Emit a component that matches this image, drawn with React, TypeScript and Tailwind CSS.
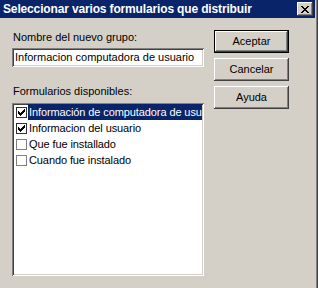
import React from "react";

interface FormItem {
  label: string;
  checked: boolean;
  selected?: boolean;
}

const items: FormItem[] = [
  { label: "Información de computadora de usuario", checked: true, selected: true },
  { label: "Informacion del usuario", checked: true },
  { label: "Que fue installado", checked: false },
  { label: "Cuando fue instalado", checked: false },
];

const raised =
  "shadow-[inset_-1px_-1px_#404040,inset_1px_1px_#ffffff,inset_-2px_-2px_#808080,inset_2px_2px_#d4d0c8]";
const sunken =
  "shadow-[inset_1px_1px_#808080,inset_-1px_-1px_#ffffff,inset_2px_2px_#404040,inset_-2px_-2px_#d4d0c8]";

const CheckBox: React.FC<{ checked: boolean }> = ({ checked }) => (
  <span
    className={`flex h-[11px] w-[11px] shrink-0 items-center justify-center border bg-white ${
      checked ? "border-[#303030]" : "border-[#808080]"
    }`}
  >
    {checked && (
      <svg width="7" height="7" viewBox="0 0 7 7" shapeRendering="crispEdges">
        <path d="M0 2h1v3H0zM1 3h1v3H1zM2 4h1v3H2zM3 3h1v3H3zM4 2h1v3H4zM5 1h1v3H5zM6 0h1v3H6z" fill="#000" />
      </svg>
    )}
  </span>
);

const Button: React.FC<{ label: string; isDefault?: boolean }> = ({ label, isDefault }) =>
  isDefault ? (
    <div className="border border-black">
      <div className={`flex h-[21px] w-[73px] items-center justify-center bg-[#d4d0c8] ${raised}`}>
        {label}
      </div>
    </div>
  ) : (
    <div className={`flex h-[23px] w-[75px] items-center justify-center bg-[#d4d0c8] ${raised}`}>
      {label}
    </div>
  );

export default function App() {
  return (
    <div
      className="h-[288px] w-[318px] overflow-hidden border-r border-[#404040] bg-[#d4d0c8] text-[11px] leading-[13px] text-black"
      style={{ fontFamily: '"Liberation Sans", Arial, sans-serif' }}
    >
      <div className="h-full border-r border-[#808080] pr-[1px]">
        <div className="flex h-[18px] items-center justify-between bg-[#0a246a] pl-[3px] pr-[2px]">
          <span className="text-[12px] font-bold tracking-[-0.15px] text-white">
            Seleccionar varios formularios que distribuir
          </span>
          <div className={`flex h-[14px] w-[16px] items-center justify-center bg-[#d4d0c8] ${raised}`}>
            <svg width="8" height="7" viewBox="0 0 8 7" shapeRendering="crispEdges">
              <path
                d="M0 0h2v1H0zM6 0h2v1H6zM1 1h2v1H1zM5 1h2v1H5zM2 2h4v1H2zM3 3h2v1H3zM2 4h4v1H2zM1 5h2v1H1zM5 5h2v1H5zM0 6h2v1H0zM6 6h2v1H6z"
                fill="#000"
              />
            </svg>
          </div>
        </div>

        <div className="flex items-start pl-[12px] pt-[12px]">
          <div className="flex w-[192px] flex-col">
            <label className="mt-[1px] pl-[1px]">Nombre del nuevo grupo:</label>
            <div className={`mt-[4px] flex h-[19px] items-center bg-white pl-[3px] ${sunken}`}>
              Informacion computadora de usuario
            </div>

            <label className="mt-[18px] pl-[1px]">Formularios disponibles:</label>
            <div className={`mt-[5px] h-[173px] bg-white px-[2px] pt-[1px] ${sunken}`}>
              {items.map((item) => (
                <div key={item.label} className="flex h-[16px] items-center">
                  <span className="pl-[2px] pr-[1px]">
                    <CheckBox checked={item.checked} />
                  </span>
                  <span
                    className={`flex h-[16px] min-w-0 flex-1 items-center overflow-hidden whitespace-nowrap pl-[1px] tracking-[-0.1px] ${
                      item.selected ? "bg-[#0a246a] text-white" : ""
                    }`}
                  >
                    {item.label}
                  </span>
                </div>
              ))}
            </div>
          </div>

          <div className="ml-[10px] flex flex-col gap-[5px]">
            <Button label="Aceptar" isDefault />
            <Button label="Cancelar" />
            <Button label="Ayuda" />
          </div>
        </div>
      </div>
    </div>
  );
}
